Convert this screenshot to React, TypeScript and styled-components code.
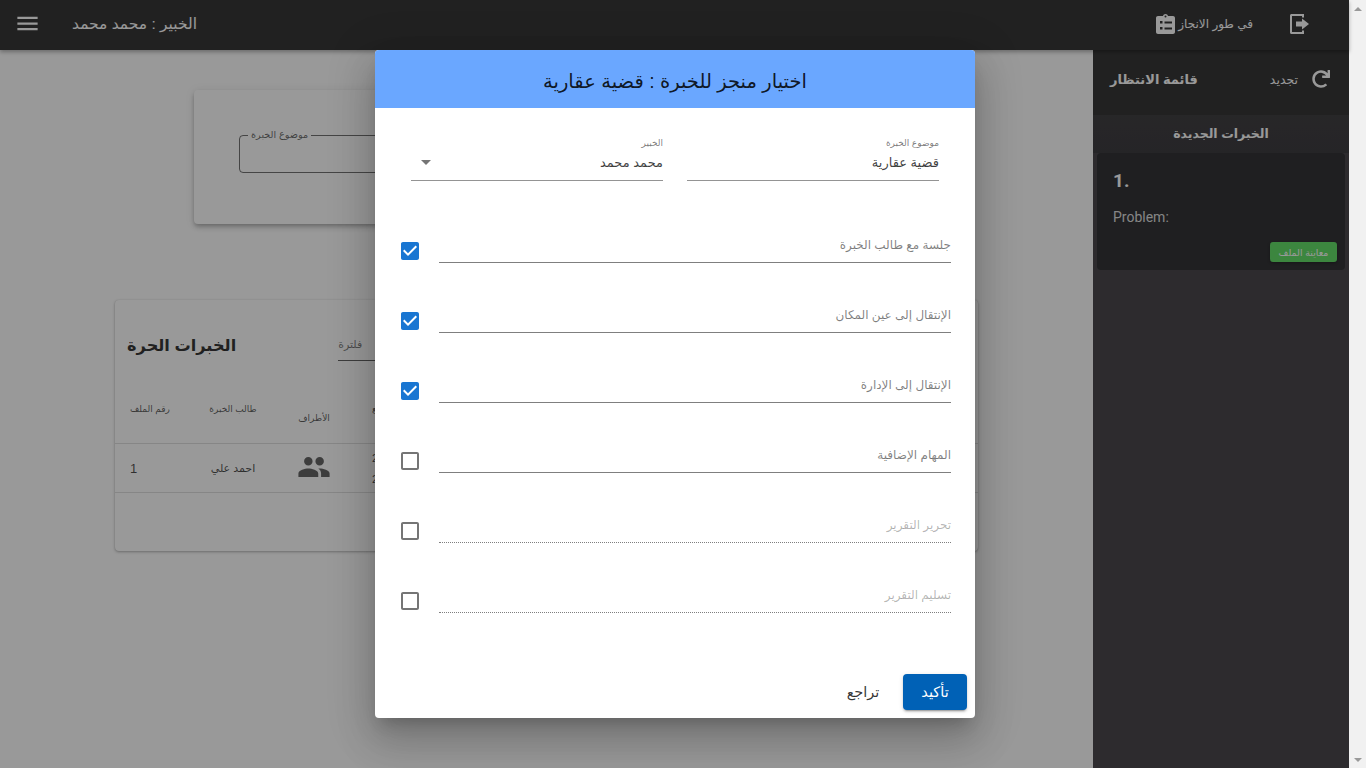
import React from "react";
import styled, { createGlobalStyle } from "styled-components";
import { FaRedo } from "react-icons/fa";

const FONT = `"Liberation Sans", "DejaVu Sans", sans-serif`;

const tasks = [
	{ label: "جلسة مع طالب الخبرة", checked: true, disabled: false },
	{ label: "الإنتقال إلى عين المكان", checked: true, disabled: false },
	{ label: "الإنتقال إلى الإدارة", checked: true, disabled: false },
	{ label: "المهام الإضافية", checked: false, disabled: false },
	{ label: "تحرير التقرير", checked: false, disabled: true },
	{ label: "تسليم التقرير", checked: false, disabled: true },
];

const App: React.FC = () => {
	return (
		<>
			<GlobalStyle />
			<Shell>
				<Workspace>
					<Topbar>
						<TopbarStart>
							<MenuIcon viewBox="0 0 24 24">
								<path d="M3 18h18v-2H3v2zm0-5h18v-2H3v2zm0-7v2h18V6H3z" />
							</MenuIcon>
							<ExpertName dir="rtl">الخبير : محمد محمد</ExpertName>
						</TopbarStart>
						<TopbarEnd>
							<StatusLink>
								<ClipboardIcon viewBox="0 0 19 20">
									<path
										fillRule="evenodd"
										d="M2 2h5C7.300 .8 8.200 0 9.500 0s2.200 .8 2.500 2h5c1.100 0 2 .9 2 2v14c0 1.100-.9 2-2 2H2c-1.100 0-2-.9-2-2V4c0-1.100 .9-2 2-2zm7.500-.5a1 1 0 1 0 0 2 1 1 0 0 0 0-2zM4 7v2.500h2.500V7H4zm4.500 .5v2H16v-2H8.500zM4 13v2.500h2.500V13H4zm4.500 .5v2H16v-2H8.500z"
									/>
								</ClipboardIcon>
								<StatusText dir="rtl">في طور الانجاز</StatusText>
							</StatusLink>
							<ExitIcon viewBox="0 0 19 20">
								<path d="M1.500 0H14v3.500h-2V2H2v16h10v-1.500h2V20H1.500C.7 20 0 19.300 0 18.500v-17C0 .7 .7 0 1.500 0z" />
								<path d="M6 7.500h6V4.500l7 5.500-7 5.500v-3H6z" />
							</ExitIcon>
						</TopbarEnd>
					</Topbar>

					<Body>
						<Main>
							<SearchCard>
								<OutlinedField>
									<OutlinedLegend>موضوع الخبرة</OutlinedLegend>
								</OutlinedField>
							</SearchCard>

							<TableCard>
								<TableToolbar>
									<TableTitle dir="rtl">الخبرات الحرة</TableTitle>
									<FilterField>فلترة</FilterField>
								</TableToolbar>
								<TableHead>
									<HeadCell>رقم الملف</HeadCell>
									<HeadCell>طالب الخبرة</HeadCell>
									<HeadCell $low>الأطراف</HeadCell>
									<HeadCell $start>تاريخ الرفع</HeadCell>
								</TableHead>
								<TableRow>
									<BodyCell>1</BodyCell>
									<BodyCell>احمد علي</BodyCell>
									<BodyCell>
										<PeopleIcon viewBox="0 0 24 24">
											<path d="M16 11c1.660 0 2.990-1.340 2.990-3S17.660 5 16 5c-1.660 0-3 1.340-3 3s1.340 3 3 3zm-8 0c1.660 0 2.990-1.340 2.990-3S9.660 5 8 5C6.340 5 5 6.340 5 8s1.340 3 3 3zm0 2c-2.330 0-7 1.170-7 3.500V19h14v-2.500c0-2.330-4.670-3.500-7-3.500zm8 0c-.29 0-.62 .02-.97 .05 1.160 .84 1.970 1.970 1.970 3.450V19h6v-2.500c0-2.330-4.670-3.500-7-3.500z" />
										</PeopleIcon>
									</BodyCell>
									<DateCell>
										<span>2021</span>
										<span>2021</span>
									</DateCell>
								</TableRow>
							</TableCard>
						</Main>

						<Sidebar>
							<SidebarHead>
								<WaitingTitle dir="rtl">قائمة الانتظار</WaitingTitle>
								<RefreshLink>
									<RefreshLabel dir="rtl">تجديد</RefreshLabel>
									<FaRedo size={18} />
								</RefreshLink>
							</SidebarHead>
							<SectionBand dir="rtl">الخبرات الجديدة</SectionBand>
							<QueueCard>
								<QueueNumber>1.</QueueNumber>
								<QueueProblem>Problem:</QueueProblem>
								<QueueActions>
									<PreviewButton dir="rtl">معاينة الملف</PreviewButton>
								</QueueActions>
							</QueueCard>
						</Sidebar>
					</Body>

					<Overlay>
						<Modal>
							<ModalHeader dir="rtl">اختيار منجز للخبرة : قضية عقارية</ModalHeader>
							<TopFields>
								<SelectField>
									<SmallLabel dir="rtl">الخبير</SmallLabel>
									<SelectValue>
										<Caret />
										<span dir="rtl">محمد محمد</span>
									</SelectValue>
								</SelectField>
								<SelectField>
									<SmallLabel dir="rtl">موضوع الخبرة</SmallLabel>
									<SelectValue>
										<span />
										<span dir="rtl">قضية عقارية</span>
									</SelectValue>
								</SelectField>
							</TopFields>

							<TaskList>
								{tasks.map((task) => (
									<TaskRow key={task.label}>
										<CheckIcon viewBox="0 0 24 24" $checked={task.checked}>
											{task.checked ? (
												<path d="M19 3H5c-1.110 0-2 .9-2 2v14c0 1.100 .89 2 2 2h14c1.110 0 2-.9 2-2V5c0-1.100-.89-2-2-2zm-9 14l-5-5 1.410-1.410L10 14.170l7.590-7.590L19 8l-9 9z" />
											) : (
												<path d="M19 5v14H5V5h14m0-2H5c-1.100 0-2 .9-2 2v14c0 1.100 .9 2 2 2h14c1.100 0 2-.9 2-2V5c0-1.100-.9-2-2-2z" />
											)}
										</CheckIcon>
										<TaskField dir="rtl" $disabled={task.disabled}>
											{task.label}
										</TaskField>
									</TaskRow>
								))}
							</TaskList>

							<ModalFooter>
								<BackButton dir="rtl">تراجع</BackButton>
								<ConfirmButton dir="rtl">تأكيد</ConfirmButton>
							</ModalFooter>
						</Modal>
					</Overlay>
				</Workspace>

				<Scrollbar>
					<ArrowUp />
					<ArrowDown />
				</Scrollbar>
			</Shell>
		</>
	);
};

export default App;

const GlobalStyle = createGlobalStyle`
	html, body {
		margin: 0;
		height: 100%;
		overflow: hidden;
	}
	body {
		font-family: ${FONT};
	}
`;

const Shell = styled.div`
	display: flex;
	width: 1366px;
	height: 768px;
	overflow: hidden;
`;

const Workspace = styled.div`
	position: relative;
	display: flex;
	flex-direction: column;
	width: 1349px;
	height: 100%;
	background: #ffffff;
`;

const Topbar = styled.header`
	display: flex;
	align-items: center;
	justify-content: space-between;
	box-sizing: border-box;
	flex: 0 0 50px;
	padding-bottom: 3px;
	background: #383838;
	color: #ffffff;
	box-shadow: 0 2px 4px rgba(0, 0, 0, 0.3);
	z-index: 1;
`;

const TopbarStart = styled.div`
	display: flex;
	align-items: center;
	gap: 31px;
	padding-left: 14px;
`;

const MenuIcon = styled.svg`
	width: 27px;
	height: 27px;
	fill: #ffffff;
`;

const ExpertName = styled.div`
	font-size: 15.5px;
`;

const TopbarEnd = styled.div`
	display: flex;
	align-items: center;
	gap: 37px;
	padding-right: 40px;
`;

const StatusLink = styled.div`
	display: flex;
	align-items: center;
	gap: 3px;
`;

const ClipboardIcon = styled.svg`
	width: 19px;
	height: 20px;
	fill: #ffffff;
`;

const StatusText = styled.span`
	font-size: 12px;
`;

const ExitIcon = styled.svg`
	width: 19px;
	height: 20px;
	margin-top: 1px;
	fill: #ffffff;
`;

const Body = styled.div`
	display: flex;
	flex: 1;
	min-height: 0;
`;

const Main = styled.main`
	flex: 1;
	display: flex;
	flex-direction: column;
	align-items: center;
	padding-top: 40px;
`;

const SearchCard = styled.section`
	box-sizing: border-box;
	width: 705px;
	height: 134px;
	padding: 39px 45px 0;
	border-radius: 4px;
	background: #ffffff;
	box-shadow: 0 2px 4px -1px rgba(0, 0, 0, 0.2), 0 4px 5px rgba(0, 0, 0, 0.12), 0 1px 10px rgba(0, 0, 0, 0.1);
`;

const OutlinedField = styled.fieldset`
	box-sizing: border-box;
	height: 44px;
	margin: 0;
	padding: 0 0 0 8px;
	border: 1px solid rgba(0, 0, 0, 0.55);
	border-radius: 4px;
`;

const OutlinedLegend = styled.legend`
	padding: 0 3px;
	font-size: 9.7px;
	line-height: 12px;
	color: rgba(0, 0, 0, 0.6);
`;

const TableCard = styled.section`
	box-sizing: border-box;
	width: 863px;
	height: 251px;
	margin-top: 76px;
	border-radius: 4px;
	background: #ffffff;
	box-shadow: 0 1px 3px rgba(0, 0, 0, 0.3), 0 0 1px rgba(0, 0, 0, 0.12);
`;

const TableToolbar = styled.div`
	display: flex;
	align-items: center;
	height: 90px;
	padding-left: 12px;
	gap: 102px;
`;

const TableTitle = styled.h2`
	margin: 0;
	font-size: 16.2px;
	font-weight: bold;
	color: rgba(0, 0, 0, 0.8);
`;

const FilterField = styled.div`
	box-sizing: border-box;
	width: 260px;
	height: 32px;
	padding-top: 8px;
	direction: ltr;
	text-align: left;
	font-size: 11px;
	line-height: 14px;
	color: rgba(0, 0, 0, 0.5);
	border-bottom: 1px solid rgba(0, 0, 0, 0.6);
`;

const TableHead = styled.div`
	display: grid;
	grid-template-columns: 70px 96px 66px 1fr;
	height: 53px;
	border-bottom: 1px solid rgba(0, 0, 0, 0.12);
`;

const HeadCell = styled.div<{ $low?: boolean; $start?: boolean }>`
	padding-top: ${(p) => (p.$low ? "22px" : "13px")};
	padding-left: ${(p) => (p.$start ? "25px" : "0")};
	text-align: ${(p) => (p.$start ? "left" : "center")};
	font-size: 9px;
	line-height: 12px;
	color: rgba(0, 0, 0, 0.65);
	direction: rtl;
`;

const TableRow = styled.div`
	display: grid;
	grid-template-columns: 70px 96px 66px 1fr;
	align-items: center;
	height: 48px;
	border-bottom: 1px solid rgba(0, 0, 0, 0.12);
`;

const BodyCell = styled.div`
	display: flex;
	justify-content: center;
	font-size: 11px;
	color: rgba(0, 0, 0, 0.7);
	direction: rtl;

	&:first-child {
		justify-content: flex-start;
		direction: ltr;
		padding-left: 15px;
		font-size: 13px;
	}
`;

const PeopleIcon = styled.svg`
	width: 34px;
	height: 34px;
	margin-top: -2px;
	fill: rgba(0, 0, 0, 0.6);
`;

const DateCell = styled.div`
	display: flex;
	flex-direction: column;
	gap: 9px;
	padding-left: 25px;
	font-size: 11px;
	color: rgba(0, 0, 0, 0.7);
`;

const Sidebar = styled.aside`
	flex: 0 0 256px;
	display: flex;
	flex-direction: column;
	background: #4b494e;
	color: #ffffff;
`;

const SidebarHead = styled.div`
	display: flex;
	align-items: center;
	justify-content: space-between;
	height: 65px;
	padding: 0 19px 7px 17px;
	background: #383838;
	box-sizing: border-box;
`;

const WaitingTitle = styled.div`
	font-size: 13px;
	font-weight: bold;
`;

const RefreshLink = styled.div`
	display: flex;
	align-items: center;
	gap: 14px;
`;

const RefreshLabel = styled.span`
	font-size: 12.5px;
`;

const SectionBand = styled.div`
	display: flex;
	align-items: center;
	justify-content: center;
	height: 38px;
	padding-bottom: 2px;
	box-sizing: border-box;
	background: linear-gradient(#424144, #3f3e42);
	font-size: 12.5px;
	font-weight: bold;
`;

const QueueCard = styled.article`
	box-sizing: border-box;
	width: 248px;
	height: 117px;
	margin-left: 4px;
	padding: 17px 8px 8px 16px;
	border-radius: 4px;
	background: #343437;
	display: flex;
	flex-direction: column;
`;

const QueueNumber = styled.div`
	font-family: Roboto, sans-serif;
	font-size: 19px;
	font-weight: bold;
	line-height: 22px;
`;

const QueueProblem = styled.div`
	margin-top: 15px;
	font-family: Roboto, sans-serif;
	font-size: 14px;
	line-height: 20px;
	color: rgba(255, 255, 255, 0.85);
`;

const QueueActions = styled.div`
	display: flex;
	justify-content: flex-end;
	margin-top: auto;
`;

const PreviewButton = styled.button`
	width: 67px;
	height: 20px;
	padding: 0;
	border: 0;
	border-radius: 3px;
	background: #64e069;
	color: #ffffff;
	font-family: ${FONT};
	font-size: 9.5px;
	box-shadow: 0 1px 3px rgba(0, 0, 0, 0.3);
`;

const Overlay = styled.div`
	position: absolute;
	inset: 0;
	z-index: 2;
	display: flex;
	justify-content: center;
	align-items: flex-start;
	padding: 50px 0 0 1px;
	box-sizing: border-box;
	background: rgba(0, 0, 0, 0.4);
`;

const Modal = styled.div`
	display: flex;
	flex-direction: column;
	width: 600px;
	height: 668px;
	border-radius: 4px;
	overflow: hidden;
	background: #ffffff;
	box-shadow: 0 11px 15px -7px rgba(0, 0, 0, 0.2), 0 24px 38px 3px rgba(0, 0, 0, 0.14), 0 9px 46px 8px rgba(0, 0, 0, 0.12);
`;

const ModalHeader = styled.div`
	display: flex;
	align-items: center;
	justify-content: center;
	box-sizing: border-box;
	flex: 0 0 58px;
	padding-top: 4px;
	background: #6aa7ff;
	font-size: 19.5px;
	color: rgba(0, 0, 0, 0.87);
`;

const TopFields = styled.div`
	display: grid;
	grid-template-columns: 252px 252px;
	gap: 24px;
	padding: 28px 36px 0;
`;

const SelectField = styled.div`
	display: flex;
	flex-direction: column;
	height: 44px;
	border-bottom: 1px solid rgba(0, 0, 0, 0.42);
`;

const SmallLabel = styled.div`
	font-size: 9px;
	line-height: 14px;
	color: rgba(0, 0, 0, 0.54);
`;

const SelectValue = styled.div`
	display: flex;
	align-items: center;
	justify-content: space-between;
	height: 25px;
	font-size: 13px;
	color: rgba(0, 0, 0, 0.75);
`;

const Caret = styled.span`
	width: 0;
	height: 0;
	margin-left: 10px;
	border-left: 5px solid transparent;
	border-right: 5px solid transparent;
	border-top: 5px solid rgba(0, 0, 0, 0.54);
`;

const TaskList = styled.div`
	display: flex;
	flex-direction: column;
	margin-top: 35px;
	padding: 0 24px 0 23px;
`;

const TaskRow = styled.div`
	display: flex;
	align-items: flex-start;
	gap: 17px;
	height: 70px;
`;

const CheckIcon = styled.svg<{ $checked: boolean }>`
	flex: 0 0 24px;
	width: 24px;
	height: 24px;
	margin-top: 23px;
	fill: ${(p) => (p.$checked ? "#1976d2" : "rgba(0, 0, 0, 0.54)")};
`;

const TaskField = styled.div<{ $disabled: boolean }>`
	box-sizing: border-box;
	flex: 1;
	height: 47px;
	padding-top: 20px;
	font-size: 12px;
	line-height: 18px;
	color: ${(p) => (p.$disabled ? "rgba(0, 0, 0, 0.3)" : "rgba(0, 0, 0, 0.5)")};
	border-bottom: 1px ${(p) => (p.$disabled ? "dotted" : "solid")} rgba(0, 0, 0, 0.5);
`;

const ModalFooter = styled.div`
	display: flex;
	justify-content: flex-end;
	align-items: center;
	gap: 12px;
	margin-top: auto;
	padding: 0 8px 8px 0;
`;

const BackButton = styled.button`
	width: 56px;
	height: 36px;
	padding: 0;
	border: 0;
	background: transparent;
	color: rgba(0, 0, 0, 0.8);
	font-family: ${FONT};
	font-size: 14.5px;
`;

const ConfirmButton = styled.button`
	width: 64px;
	height: 36px;
	padding: 0;
	border: 0;
	border-radius: 4px;
	background: #0061b6;
	color: #ffffff;
	font-family: ${FONT};
	font-size: 14.5px;
	box-shadow: 0 3px 1px -2px rgba(0, 0, 0, 0.2), 0 2px 2px rgba(0, 0, 0, 0.14), 0 1px 5px rgba(0, 0, 0, 0.12);
`;

const Scrollbar = styled.div`
	flex: 0 0 17px;
	display: flex;
	flex-direction: column;
	justify-content: space-between;
	align-items: center;
	padding: 7px 0 6px;
	box-sizing: border-box;
	background: #f1f1f1;
`;

const ArrowUp = styled.span`
	width: 0;
	height: 0;
	border-left: 4px solid transparent;
	border-right: 4px solid transparent;
	border-bottom: 4px solid #999999;
`;

const ArrowDown = styled.span`
	width: 0;
	height: 0;
	border-left: 4px solid transparent;
	border-right: 4px solid transparent;
	border-top: 4px solid #999999;
`;
